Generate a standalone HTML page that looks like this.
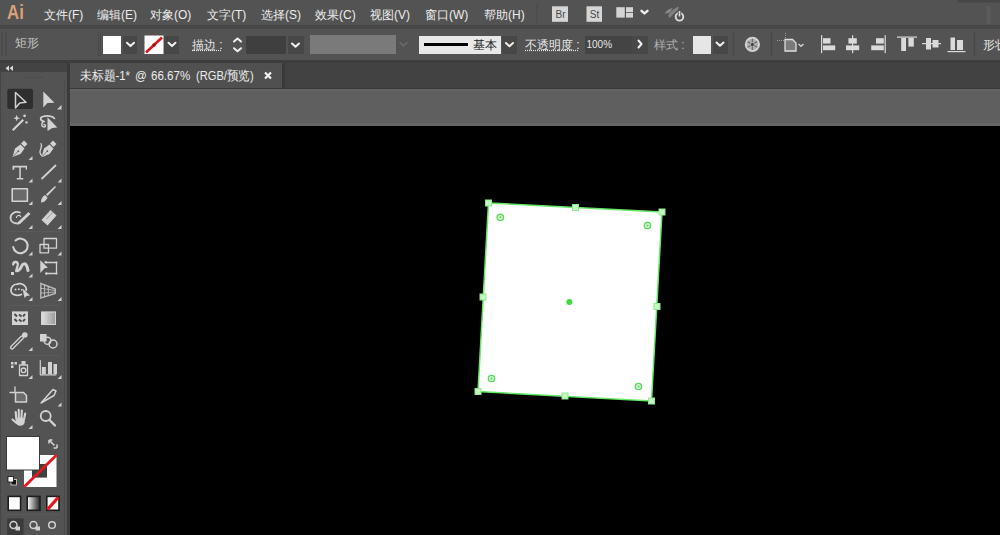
<!DOCTYPE html>
<html><head><meta charset="utf-8">
<style>
*{box-sizing:border-box;margin:0;padding:0}
html,body{width:1000px;height:535px;overflow:hidden;background:#535353;font-family:"Liberation Sans",sans-serif;color:#e0e0e0}
.a{position:absolute}
#menubar{left:0;top:0;width:1000px;height:25px;background:#535353}
#sep1{left:0;top:25px;width:1000px;height:4px;background:#474747}
#ctrl{left:0;top:29px;width:1000px;height:31px;background:#535353}
#sep2{left:0;top:60px;width:1000px;height:3px;background:#3d3d3d}
.mi{position:absolute;top:8px;font-size:12px;line-height:14px;color:#ececec;white-space:nowrap}
.ct{position:absolute;font-size:12px;line-height:14px;color:#e6e6e6;white-space:nowrap}
.dd{position:absolute;top:36px;height:18px;background:#474747}
.chev{position:absolute}
#tools{left:0;top:63px;width:67px;height:472px;background:#535353}
#toolhdr{left:0;top:63px;width:67px;height:9px;background:#434343}
#vsep{left:67px;top:63px;width:3px;height:472px;background:#3a3a3a}
#tabbar{left:70px;top:63px;width:930px;height:25px;background:#424242}
#tab{left:70px;top:63px;width:212px;height:25px;background:#505050}
#tabsep{left:282px;top:63px;width:3px;height:25px;background:#3a3a3a}
#tabline{left:70px;top:88px;width:930px;height:1px;background:#383838}
#paste{left:70px;top:89px;width:930px;height:37px;background:#5f5f5f;border-top:2px solid #646464;border-bottom:3px solid #666}
.tt{position:absolute;top:69px;font-size:12.5px;line-height:15px;color:#ececec;white-space:nowrap;transform-origin:0 0}
#canvas{left:70px;top:126px;width:930px;height:409px;background:#000}
</style></head><body>
<div class="a" id="menubar"></div>
<div class="a" id="sep1"></div>
<div class="a" id="ctrl"></div>
<div class="a" id="sep2"></div>

<!-- menu -->
<div class="a" style="left:7px;top:0px;font-size:21px;line-height:23px;color:#dc9f78;font-weight:bold;transform:scaleX(0.8);transform-origin:0 0">Ai</div>
<div class="mi" style="left:44px">文件(F)</div>
<div class="mi" style="left:97px">编辑(E)</div>
<div class="mi" style="left:150px">对象(O)</div>
<div class="mi" style="left:207px">文字(T)</div>
<div class="mi" style="left:261px">选择(S)</div>
<div class="mi" style="left:315px">效果(C)</div>
<div class="mi" style="left:370px">视图(V)</div>
<div class="mi" style="left:425px">窗口(W)</div>
<div class="mi" style="left:484px">帮助(H)</div>

<!-- control bar -->
<div class="ct" style="left:15px;top:35.5px;color:#c4c4c4">矩形</div>
<div class="a" style="left:103px;top:36px;width:18px;height:18px;background:#fff"></div>
<div class="dd" style="left:123px;width:14px"></div>
<div class="a" style="left:145px;top:36px;width:18px;height:18px;background:#fff"></div>
<div class="dd" style="left:164px;width:15px"></div>
<div class="ct" style="left:192px;top:38px;text-decoration:underline dotted">描边 :</div>
<div class="a" style="left:246px;top:36px;width:40px;height:18px;background:#3f3f3f"></div>
<div class="dd" style="left:288px;width:16px"></div>
<div class="a" style="left:310px;top:35px;width:86px;height:19px;background:#7a7a7a"></div>
<div class="a" style="left:419px;top:36px;width:82px;height:18px;background:#e8e8e8"></div>
<div class="a" style="left:424px;top:43px;width:44px;height:3px;background:#000"></div>
<div class="ct" style="left:473px;top:38px;color:#222">基本</div>
<div class="dd" style="left:502px;width:15px"></div>
<div class="ct" style="left:525px;top:38px;text-decoration:underline dotted">不透明度 :</div>
<div class="a" style="left:585px;top:36px;width:47px;height:18px;background:#444"></div>
<div class="ct" style="left:586.5px;top:38px;font-size:10px">100%</div>
<div class="dd" style="left:632px;width:16px"></div>
<div class="ct" style="left:654px;top:38px;color:#b0b0b0">样式 :</div>
<div class="a" style="left:693px;top:36px;width:18px;height:18px;background:#e6e6e6"></div>
<div class="dd" style="left:713px;width:15px"></div>
<div class="ct" style="left:983px;top:38px">形状</div>


<!-- control bar + menu icons -->
<svg class="a" style="left:0;top:0" width="1000" height="63" viewBox="0 0 1000 63">
<g fill="none" stroke="#f0f0f0" stroke-width="2" stroke-linecap="round" stroke-linejoin="round">
<path d="M127 42.8l3.5 3.3 3.5-3.3"/>
<path d="M168.5 42.8l3.5 3.3 3.5-3.3"/>
<path d="M292 43.5l3.5 3.3 3.5-3.3"/>
<path d="M506 43l3.5 3.3 3.5-3.3"/>
<path d="M716.5 42.5l3.5 3.3 3.5-3.3"/>
<path d="M234 41.5l3.5-3 3.5 3"/>
<path d="M234 48.2l3.5 3 3.5-3"/>
<path d="M638.5 40.5l3 3.5-3 3.5"/>
<path d="M641.5 10.8l3 2.6 3-2.6" stroke-width="2.4"/>
</g>
<path d="M400 42.5l3.5 3.3 3.5-3.3" fill="none" stroke="#6a6a6a" stroke-width="1.6" stroke-linecap="round"/>
<!-- stroke swatch -->
<rect x="144.5" y="35.5" width="19" height="18.5" fill="#fff"/>
<path d="M146 52.5L162 37.5" stroke="#e0141e" stroke-width="2.6"/>
<circle cx="154" cy="45" r="1.8" fill="#8a1a1a"/>
<!-- Br St -->
<rect x="552" y="6.3" width="16" height="15.5" fill="#d6d6d6"/>
<rect x="586.5" y="6.3" width="15.5" height="15.5" fill="#d6d6d6"/>
<text x="560.5" y="17.6" font-family="Liberation Sans" font-size="10" fill="#4a4a4a" text-anchor="middle">Br</text>
<text x="594.5" y="17.6" font-family="Liberation Sans" font-size="10" fill="#4a4a4a" text-anchor="middle">St</text>
<!-- layout -->
<rect x="616.3" y="7.2" width="8.5" height="10.4" fill="#d4d4d4"/>
<rect x="626" y="7.2" width="7" height="4.8" fill="#d4d4d4"/>
<rect x="626" y="12.8" width="7" height="4.8" fill="#d4d4d4"/>
<!-- rocket -->
<path d="M664.5 13.5c2-3 5-5 8-5.5l-2.5 4.5c-2 0.5-3.5 1-5.5 1z" fill="#8a8a8a"/><path d="M668 16c2-4 6-8 11-9.5l-1 3.5c-3 2-6 5-8 8z" fill="#808080"/>
<circle cx="679.5" cy="16.8" r="3.8" fill="none" stroke="#dcdcdc" stroke-width="1.9"/>
<path d="M679.5 10.5v6" stroke="#535353" stroke-width="3.5"/>
<path d="M679.5 11v5.5" stroke="#dcdcdc" stroke-width="1.6"/>
<rect x="958" y="0" width="42" height="2.5" fill="#474747"/>
<rect x="986.5" y="6" width="4" height="18" fill="#5b5b5b"/>
<!-- menu separator -->
<path d="M537 3v22" stroke="#4a4a4a" stroke-width="1"/>
<!-- gripper -->
<path d="M2 32v24M6 32v24" stroke="#444" stroke-width="1"/>
<path d="M98.5 32v24M100.5 32v24" stroke="#484848" stroke-width="1"/>
<path d="M733.5 32v24M771.5 32v24M974.5 32v24" stroke="#474747" stroke-width="1.5"/>
<!-- recolor wheel -->
<circle cx="752.4" cy="44.4" r="7.6" fill="#d2d2d2"/>
<circle cx="752.4" cy="44.4" r="5.6" fill="#b0b0b0"/><path d="M752.40 42.20L752.40 38.80M754.31 43.30L757.25 41.60M754.31 45.50L757.25 47.20M752.40 46.60L752.40 50.00M750.49 45.50L747.55 47.20M750.49 43.30L747.55 41.60" stroke="#6e6e6e" stroke-width="1.3"/>
<circle cx="752.4" cy="44.4" r="1.5" fill="#3a3a3a"/>
<!-- transform icon -->
<path d="M785 39.5h7.5l3.5 3.5v8h-11z" fill="#7a7a7a" stroke="#dedede" stroke-width="1.3"/>
<path d="M777 40.5h7M785.5 33v6" stroke="#9a9a9a" stroke-width="1" stroke-dasharray="1 1"/>
<path d="M798.5 44l2.5 2.3 2.5-2.3" fill="none" stroke="#cfcfcf" stroke-width="1.5"/>
<!-- align icons -->
<g fill="#dadada">
<rect x="821" y="35.2" width="1.2" height="18"/>
<rect x="823" y="38.2" width="7.5" height="5.4"/>
<rect x="823" y="45.4" width="12.2" height="4.8"/>
<rect x="852" y="35.2" width="1.2" height="18"/>
<rect x="848.4" y="38.2" width="8.4" height="5.4"/>
<rect x="846" y="45.4" width="13.2" height="4.8"/>
<rect x="884.6" y="35.2" width="1.2" height="18"/>
<rect x="876" y="38.2" width="7.8" height="5.4"/>
<rect x="871.2" y="45.4" width="12.6" height="4.8"/>
<rect x="897" y="36.5" width="20" height="1.2"/>
<rect x="901.2" y="38" width="4.8" height="13"/>
<rect x="908.4" y="38" width="5.4" height="8.6"/>
<rect x="922" y="43" width="19" height="1.2"/>
<rect x="926" y="38" width="5" height="11.5"/>
<rect x="932.5" y="40" width="6" height="7.5"/>
<rect x="947.5" y="51" width="18" height="1.2"/>
<rect x="950.5" y="37.5" width="4.5" height="12.5"/>
<rect x="957" y="40" width="6" height="10"/>
</g>
</svg>

<!-- tools panel -->
<div class="a" id="tools"></div>
<div class="a" id="toolhdr"></div>
<div class="a" id="vsep"></div>


<!-- tool icons -->
<svg class="a" style="left:0;top:0" width="70" height="535" viewBox="0 0 70 535">
<!-- header arrows -->
<path d="M9 65.5v5.5l-3.5-2.75zM13 65.5v5.5l-3.5-2.75z" fill="#d8d8d8"/>
<path d="M24 77.5h18.5" stroke="#454545" stroke-width="1" stroke-dasharray="1 1"/>
<!-- selected bg -->
<rect x="7.3" y="88.7" width="25.7" height="20.3" rx="2" fill="#2f2f2f"/>
<g fill="#d0d0d0" stroke="none">
<!-- triangles -->
<path d="M61.5 105v4.5h-4.5z"/>
<path d="M32.5 156v4h-4z"/><path d="M61.5 156v4h-4z" opacity="0"/>
<path d="M32.5 178.5v4h-4z"/><path d="M61.5 178.5v4h-4z"/>
<path d="M32.5 201v4h-4z"/><path d="M61.5 201v4h-4z"/>
<path d="M32.5 225v4h-4z"/><path d="M61.5 225v4h-4z"/>
<path d="M32.5 251.5v4h-4z"/><path d="M61.5 251.5v4h-4z"/>
<path d="M32.5 273.5v4h-4z"/>
<path d="M32.5 297v4h-4z"/><path d="M61.5 297v4h-4z"/>
<path d="M32.5 347v4h-4z"/>
<path d="M32.5 375v4h-4z"/><path d="M61.5 375v4h-4z"/>
<path d="M61.5 402.5v4h-4z"/>
<path d="M32.5 425v4h-4z"/>
</g>
<g fill="none" stroke="#d2d2d2" stroke-width="1.5" stroke-linejoin="round" stroke-linecap="round">
<!-- selection -->
<path d="M15.5 92.5L26 102.3l-6.3 0.6-4.2 5z"/>
<!-- rotate -->
<path d="M15.5 240.5A7.3 7.3 0 1 1 13.2 247" stroke-width="2"/>
<!-- scale -->
<rect x="44" y="238.5" width="12.5" height="9.7" stroke-width="1.3"/>
<rect x="40" y="244.5" width="8.5" height="8.3" stroke-width="1.3"/>
<!-- rect -->
<rect x="12.2" y="188.7" width="15.2" height="12.6" fill="#6a6a6a" stroke-width="1.6"/>
<!-- line -->
<path d="M42 178.5L55.5 165.5" stroke-width="1.8"/>
<!-- zoom -->
<circle cx="45.7" cy="416" r="5" stroke-width="1.8"/>
<path d="M49.5 420l5.5 5.5" stroke-width="2.4"/>
<!-- shaper -->
<path d="M20 212.5c-5-2-9.5 1.5-9.5 5.5s4 5.5 7 5.5" stroke-width="1.8"/>
<path d="M16.5 217.5c0-2 3-3 4-1" stroke-width="1.2"/>
<!-- lasso -->
<path d="M44 121.5c-4-1-4.5-4-1-5 4-1.2 10-0.5 11.5 2" stroke-width="1.6"/>
<path d="M44 121.5c-3 1-3 5 0 5.5 2 0.3 2-2 0-2.5" stroke-width="1.4"/>
<!-- shape builder -->
<path d="M21.5 294.5c-4 1.5-10.5 1-10.5-4 0-4 3-6.5 6-6.2 1-1 6-1.5 8.5 2.5 0.8 1.2 1 2.5 0.5 3.5" stroke-width="1.7"/>
<!-- curvature curve -->
<path d="M41 143.5c2 3-1.5 6-1 9 0.4 3 3 4 5 3" stroke-width="1.3"/>
<!-- free transform rect -->
<path d="M46.5 262.5h10v11h-10" stroke-width="1.3"/>
<!-- artboard -->
<path d="M10 392.5h5M15 387v5" stroke-width="1.3"/>
<path d="M15.5 392.5h8l3 3v6.5h-11z" fill="#6c6c6c" stroke-width="1.5"/>
<!-- slice -->
<path d="M41 403l12-13.5 3 1.5-2 4.5z" stroke-width="1.5"/>
<!-- graph axes -->
<path d="M40.3 360.6v14.2h15.7" stroke-width="1.2"/>
<!-- symbol sprayer -->
<rect x="19.5" y="365" width="8" height="10.5" stroke-width="1.3"/>
<circle cx="23.5" cy="370.3" r="2.3" stroke-width="1.4"/>
<!-- blend circles -->
<circle cx="47.5" cy="340.8" r="3.5" stroke-width="1.4"/>
<circle cx="53" cy="344" r="4" stroke-width="1.5"/>
<!-- eyedropper -->
<path d="M12 347.5l10-10" stroke-width="4.2" stroke="#d2d2d2"/>
<path d="M12 347.5l10-10" stroke-width="1.6" stroke="#535353"/>
</g>
<g fill="#d2d2d2">
<!-- direct selection -->
<path d="M43.3 91.5L54.5 102.8l-7 0.3-4.2 4.5z"/>
<!-- magic wand -->
<path d="M12 129.5l10.5-10.5 1.5 1.5-10.5 10.5z"/>
<path d="M16.7 114.8l0.9 2.5 2.5 0.9-2.5 0.9-0.9 2.5-0.9-2.5-2.5-0.9 2.5-0.9z"/>
<circle cx="24.6" cy="115.8" r="1.4"/><circle cx="26.5" cy="122.4" r="1.2"/>
<!-- lasso arrow -->
<path d="M47.5 117.2L57.3 127.5l-5 0.5-4.8 3z"/>
<!-- pen nibs -->
<path d="M12.5 157l2.5-8.5 5.5-4 4 4-4 5.5z"/>
<path d="M21 143.5l3-3 3.5 3.5-3 3z"/>
<path d="M41.5 157l2.5-8.5 5.5-4 4 4-4 5.5z"/>
<path d="M50 143.5l3-3 3.5 3.5-3 3z"/>
<!-- type -->
<path d="M12.5 165.8h14.5v4h-1.2v-2.2h-5v10.5h2.5v1.4h-6.5v-1.4h2.5v-10.5h-5v2.2h-1.8z"/>
<!-- brush -->
<path d="M41 202.5c0-3 1-6 4-7.5l2.5 2.5c-1 3-4 5-6.5 5z"/>
<path d="M46 194.5l9-8.5 1 1-8.5 9z"/>
<!-- shaper stick -->
<path d="M17.5 224.5l0.5-2.5 10.5-10 2 2-10.5 10z"/>
<!-- eraser -->
<path d="M41.5 220l9-10 6 5.5-9 10z"/>
<!-- width tool -->
<path d="M13.2 264.5c0-3 4.2-3.5 4.6-0.5 0.3 2-1.2 3.5-1.2 5.5" fill="none" stroke="#d2d2d2" stroke-width="2.3" stroke-linecap="round"/>
<path d="M16.5 270.8c3 0 4-1.8 5-4.5 1-3 3.8-3.2 5-0.8 0.8 1.5 1.2 3 1.5 5" fill="none" stroke="#d2d2d2" stroke-width="3" stroke-linecap="round"/>
<rect x="11" y="272" width="3" height="3"/>
<!-- free transform arrow -->
<path d="M40.3 260.3l7.6 7.5-3.3 0.5-4.3 4.7z"/><circle cx="45.8" cy="262.3" r="1.3"/><circle cx="56.5" cy="262.5" r="1"/><circle cx="56.5" cy="273.5" r="1"/><circle cx="46.3" cy="273.5" r="1.2"/>
<!-- shape builder arrow -->
<path d="M22.5 288.5l7.5 7-3.5 0.5-2 2z"/>
<!-- perspective -->
<path d="M40.8 283.5l14.5 5.5v4.5l-14.5 4.5z" fill="none" stroke="#d2d2d2" stroke-width="1.4" opacity="0.8"/>
<path d="M44.5 284.8v11.6M48.3 286.3v8.7M40.8 288.3l14.5 2.2M40.8 293l14.5-1" fill="none" stroke="#d2d2d2" stroke-width="1.1" opacity="0.75"/>
<!-- mesh -->
<rect x="12" y="311.4" width="16" height="13.6"/>
<!-- gradient -->
<rect x="41" y="311.4" width="15" height="13.6"/>
<!-- blend grid -->
<rect x="40" y="334" width="6.6" height="7.5"/>
<!-- graph bars -->
<rect x="41.8" y="367" width="4" height="7"/><rect x="48" y="362" width="4" height="12"/><rect x="53.5" y="364" width="3.5" height="10"/>
<!-- symbol dots -->
<rect x="11" y="362" width="2.5" height="2.5"/><rect x="14.5" y="362" width="2.5" height="2.5"/><rect x="11" y="365.5" width="2.5" height="2.5"/><rect x="21.5" y="361" width="4" height="3.5"/>
<!-- hand -->
<ellipse cx="20.2" cy="421.5" rx="4.6" ry="4.3"/>
<path d="M16.3 419l-0.6-7M18.8 418l-0.1-8.2M21.5 418l0.3-7.5M24 419.5l1.2-6M16.5 423l-4-3.5" fill="none" stroke="#d2d2d2" stroke-width="2.1" stroke-linecap="round"/>
<!-- eyedropper bulb -->
<circle cx="24.8" cy="335" r="2.8"/>
</g>
<!-- mesh pattern -->
<g stroke="#555" stroke-width="1.2" fill="none">
<path d="M14.5 314l2.5 2.5M14.5 319l2.5 2.5M19 314.5l2.5 2M19 319.5l2.5 2M25 314l-2 2.5M25 319l-2 2.5" stroke="#4a4a4a" stroke-width="2"/>
</g>
<defs><linearGradient id="gt" x1="0" x2="1"><stop offset="0" stop-color="#e8e8e8"/><stop offset="1" stop-color="#7a7a7a"/></linearGradient>
<linearGradient id="gm" x1="0" x2="1"><stop offset="0" stop-color="#ffffff"/><stop offset="1" stop-color="#222"/></linearGradient></defs>
<rect x="42" y="312.5" width="13" height="11.5" fill="url(#gt)" opacity="0.6"/>
<path d="M13.3 156.2l4.5-4.5M42.3 156.2l4.5-4.5" stroke="#6a6a6a" stroke-width="0.9"/><circle cx="18.3" cy="151.2" r="0.9" fill="#555"/><circle cx="47.3" cy="151.2" r="0.9" fill="#555"/>
<g fill="#d2d2d2"><circle cx="15.5" cy="289.5" r="1"/><circle cx="18.8" cy="289.2" r="1"/><circle cx="21.8" cy="289.8" r="0.9"/></g>
<!-- eraser stripes -->
<path d="M44 217l7-7.5M46.5 219l7-7.5" stroke="#8a8a8a" stroke-width="0.8"/>
<!-- separators -->
<path d="M8 231.5h52M8 305.5h52M8 355.5h52M8 514.5h52" stroke="#5a5a5a" stroke-width="1"/>

<!-- fill/stroke -->
<rect x="24" y="455" width="32.5" height="32" fill="#fff"/>
<rect x="32" y="464" width="15" height="13.6" fill="#3e423e"/>
<path d="M24 487L56.5 455" stroke="#e8141e" stroke-width="2.8"/>
<rect x="6.5" y="436.5" width="33" height="33.5" fill="#fff" stroke="#3a3a3a" stroke-width="1"/>
<!-- swap arrows -->
<path d="M49.5 440.5l5 5M49 440v3.5M49 440h3.5M57 448h-3.5M57 448v-3.5" stroke="#d0d0d0" stroke-width="1.6" fill="none"/>
<!-- default small -->
<rect x="11" y="479.5" width="5.5" height="5.5" fill="#111" stroke="#ddd" stroke-width="0.8"/>
<rect x="8" y="476.5" width="5.5" height="5.5" fill="#fff" stroke="#111" stroke-width="0.8"/>
<!-- modes -->
<rect x="8.2" y="496.4" width="12.4" height="13.9" fill="#fff" stroke="#1e1e1e" stroke-width="1.6"/>
<rect x="27.2" y="496.4" width="12.8" height="13.9" fill="url(#gm)" stroke="#1e1e1e" stroke-width="1.6"/>
<rect x="46.8" y="496.4" width="12.2" height="13.9" fill="#fff" stroke="#1e1e1e" stroke-width="1.6"/>
<path d="M47.5 509.5L58.3 497.2" stroke="#e8141e" stroke-width="3.2"/>
<!-- screen modes -->
<rect x="7.2" y="518.5" width="16.4" height="17" fill="#3a3a3a"/>
<g fill="none" stroke="#cfcfcf" stroke-width="1.5">
<circle cx="13.5" cy="525" r="3.5"/><circle cx="33.5" cy="525" r="3.5"/><circle cx="52" cy="525" r="3.3"/>
</g>
<g fill="#cfcfcf"><rect x="15.5" y="526.5" width="4.5" height="4"/><rect x="35.5" y="526.5" width="4.5" height="4"/></g>
<!-- panel edge -->
<path d="M0.5 72v463" stroke="#464646" stroke-width="1"/>
<path d="M64.5 80v455" stroke="#4c4c4c" stroke-width="1"/>
</svg>

<!-- doc -->
<div class="a" id="tabbar"></div>
<div class="a" id="tab"></div>
<div class="a" id="tabsep"></div>
<div class="tt" style="left:80px;transform:scaleX(0.91)">未标题-1*</div>
<div class="tt" style="left:134.5px;transform:scaleX(0.93)">@</div>
<div class="tt" style="left:151.3px;transform:scaleX(0.926)">66.67%</div>
<div class="tt" style="left:195.8px;transform:scaleX(0.89)">(RGB/预览)</div>
<svg class="a" style="left:263px;top:71px" width="10" height="9"><path d="M2 1.5l6 6M8 1.5l-6 6" stroke="#f2f2f2" stroke-width="2.2"/></svg>
<div class="a" id="tabline"></div>
<div class="a" id="paste"></div>
<div class="a" id="canvas"></div>

<!-- rotated rect -->
<svg class="a" style="left:0;top:0" width="1000" height="535" viewBox="0 0 1000 535">
<polygon points="488.5,203 662,212 651.5,401 478,391.5" fill="#fff" stroke="#66e866" stroke-width="1.5"/>
<g fill="#c4f6c4" stroke="#8eea8e" stroke-width="1">
<rect x="485.5" y="200" width="6" height="6"/>
<rect x="659" y="209" width="6" height="6"/>
<rect x="648.5" y="398" width="6" height="6"/>
<rect x="475" y="388.5" width="6" height="6"/>
<rect x="572.5" y="204.5" width="6" height="6"/>
<rect x="654" y="303.5" width="6" height="6"/>
<rect x="562" y="393" width="6" height="6"/>
<rect x="480" y="294" width="6" height="6"/>
</g>
<circle cx="569.3" cy="302" r="3" fill="#3ddc3d"/>
<g fill="#d4f5d4" stroke="#5ad85a" stroke-width="1.3">
<circle cx="500.3" cy="217.3" r="3.2"/><circle cx="647.5" cy="225.5" r="3.2"/>
<circle cx="638.5" cy="386.5" r="3.2"/><circle cx="491.5" cy="378.5" r="3.2"/>
</g>
<g fill="#5ad85a">
<circle cx="500.3" cy="217.3" r="1"/><circle cx="647.5" cy="225.5" r="1"/>
<circle cx="638.5" cy="386.5" r="1"/><circle cx="491.5" cy="378.5" r="1"/>
</g>
</svg>
</body></html>
